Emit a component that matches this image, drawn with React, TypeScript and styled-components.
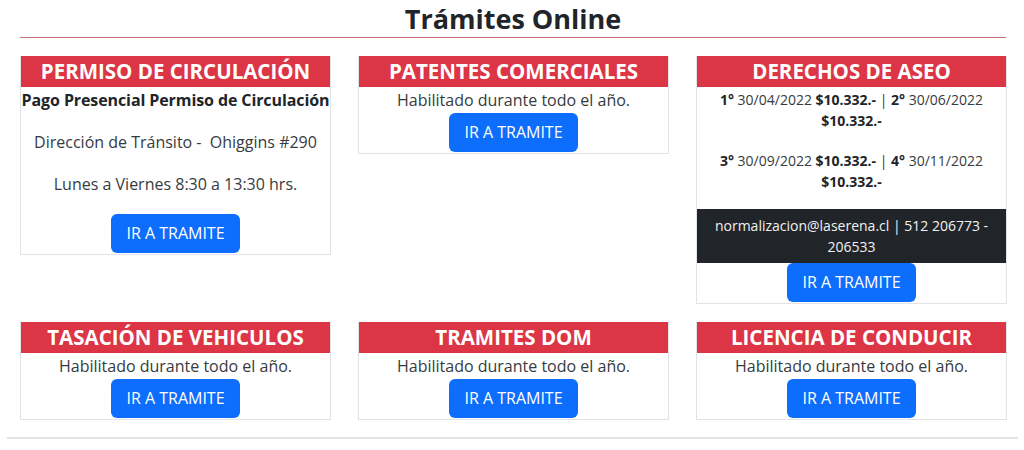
import React, { FunctionComponent } from "react";
import styled, { createGlobalStyle } from "styled-components";

const RED = "#dc3545";
const BLUE = "#0d6efd";
const TEXT = "#212529";

const GlobalStyle = createGlobalStyle`
  body {
    margin: 0;
    background: #ffffff;
    font-family: "Open Sans", "Noto Sans", sans-serif;
    color: ${TEXT};
  }
`;

const Page = styled.div`
  display: flex;
  flex-direction: column;
  width: 1024px;
  height: 450px;
  overflow: hidden;
`;

const Container = styled.div`
  display: flex;
  flex-direction: column;
  padding: 0 18px 0 20px;
`;

const Title = styled.h2`
  margin: 0;
  padding-top: 2px;
  font-size: 27px;
  font-weight: 700;
  line-height: 34px;
  text-align: center;
`;

const TitleRule = styled.div`
  height: 1px;
  margin-top: 1px;
  background: #c9727a;
`;

const CardGrid = styled.div`
  display: grid;
  grid-template-columns: repeat(3, 311px);
  column-gap: 27px;
  row-gap: 18px;
  align-items: start;
  margin-top: 18px;
`;

const Card = styled.div`
  display: flex;
  flex-direction: column;
  align-items: center;
  border: 1px solid #e1e3e6;
  border-top: none;
  text-align: center;
`;

const CardHeader = styled.div`
  align-self: stretch;
  background: ${RED};
  color: #ffffff;
  font-size: 20.5px;
  font-weight: 700;
  line-height: 31px;
  height: 31px;
  white-space: nowrap;
`;

const BodyText = styled.p<{ $bold?: boolean; $gap?: number }>`
  margin: ${(p) => p.$gap ?? 0}px 0 0 0;
  font-size: 16px;
  line-height: 24px;
  font-weight: ${(p) => (p.$bold ? 700 : 400)};
  color: #363b40;
  white-space: nowrap;
  ${(p) => p.$bold && `color: ${TEXT}; letter-spacing: -0.1px;`}
`;

const SmallText = styled.p<{ $gap?: number }>`
  margin: ${(p) => p.$gap ?? 0}px 0 0 0;
  padding: 0 6px;
  font-size: 14px;
  line-height: 21px;
  color: #363b40;
  b {
    color: ${TEXT};
  }
`;

const ContactBar = styled.div`
  align-self: stretch;
  margin-top: 17px;
  padding: 6px 12px 6px;
  background: #212529;
  color: #f1f1f1;
  font-size: 14px;
  line-height: 21px;
`;

const Button = styled.a<{ $gap?: number }>`
  display: inline-block;
  margin: ${(p) => p.$gap ?? 0}px 0 1px 0;
  padding: 0 15px;
  height: 39px;
  line-height: 39px;
  border-radius: 6px;
  background: ${BLUE};
  color: #ffffff;
  font-size: 16px;
  text-decoration: none;
`;

const FooterRule = styled.div`
  height: 2px;
  margin: 17px 6px 0 7px;
  background: #e2e2e2;
`;

interface SimpleCardProps {
  title: string;
}

const SimpleCard: FunctionComponent<SimpleCardProps> = ({ title }) => (
  <Card>
    <CardHeader>{title}</CardHeader>
    <BodyText $gap={1}>Habilitado durante todo el año.</BodyText>
    <Button $gap={1}>IR A TRAMITE</Button>
  </Card>
);

const App: FunctionComponent = () => {
  return (
    <Page>
      <GlobalStyle />
      <Container>
        <Title>Trámites Online</Title>
        <TitleRule />
        <CardGrid>
          <Card>
            <CardHeader>PERMISO DE CIRCULACIÓN</CardHeader>
            <BodyText $bold $gap={1}>
              Pago Presencial Permiso de Circulación
            </BodyText>
            <BodyText $gap={18}>Dirección de Tránsito - &nbsp;Ohiggins #290</BodyText>
            <BodyText $gap={18}>Lunes a Viernes 8:30 a 13:30 hrs.</BodyText>
            <Button $gap={18}>IR A TRAMITE</Button>
          </Card>
          <SimpleCard title="PATENTES COMERCIALES" />
          <Card>
            <CardHeader>DERECHOS DE ASEO</CardHeader>
            <SmallText $gap={2}>
              <b>1°</b> 30/04/2022 <b>$10.332.-</b> | <b>2°</b> 30/06/2022{" "}
              <b>$10.332.-</b>
            </SmallText>
            <SmallText $gap={19}>
              <b>3°</b> 30/09/2022 <b>$10.332.-</b> | <b>4°</b> 30/11/2022{" "}
              <b>$10.332.-</b>
            </SmallText>
            <ContactBar>normalizacion@laserena.cl | 512 206773 - 206533</ContactBar>
            <Button>IR A TRAMITE</Button>
          </Card>
          <SimpleCard title="TASACIÓN DE VEHICULOS" />
          <SimpleCard title="TRAMITES DOM" />
          <SimpleCard title="LICENCIA DE CONDUCIR" />
        </CardGrid>
      </Container>
      <FooterRule />
    </Page>
  );
};

export default App;
